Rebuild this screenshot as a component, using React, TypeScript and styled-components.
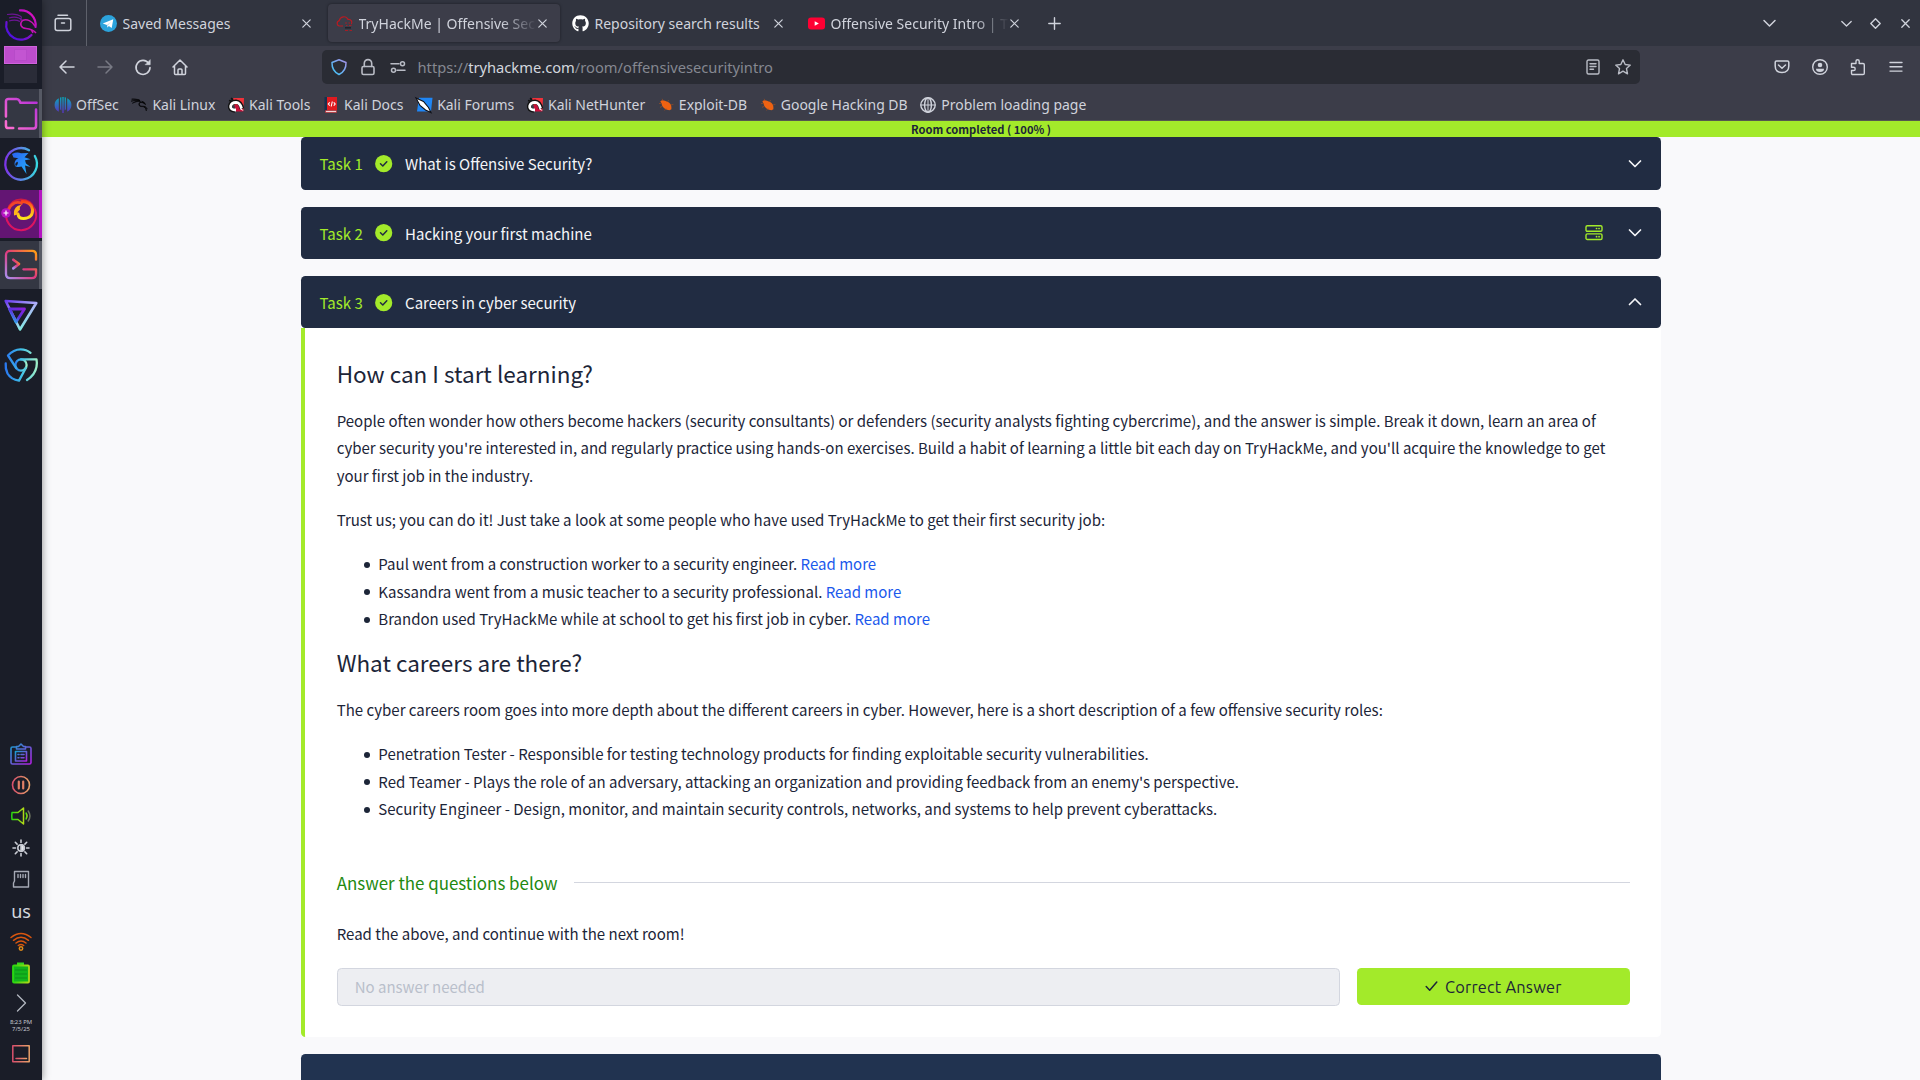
import React from 'react';
import styled, { createGlobalStyle } from 'styled-components';
import { SiKalilinux } from 'react-icons/si';
import { FaGithub } from 'react-icons/fa';

const ui = '"Noto Sans", "DejaVu Sans", sans-serif';
const body = '"Noto Sans CJK SC", "Noto Sans", sans-serif';

const Global = createGlobalStyle`
  * { box-sizing: border-box; }
  body { margin: 0; background: #f9f9fb; overflow: hidden; }
  svg { display: block; flex: none; overflow: visible; }
`;

const Desktop = styled.div`
  display: flex;
  width: 1920px;
  height: 1080px;
  overflow: hidden;
  font-family: ${ui};
`;

/* ---------- dock ---------- */
const Dock = styled.aside`
  display: flex;
  flex-direction: column;
  flex: none;
  width: 42px;
  height: 1080px;
  background: #1a1d28;
  box-shadow: 0 0 8px rgba(0, 0, 0, 0.45);
  z-index: 2;
`;
const Launcher = styled.div`
  display: flex;
  align-items: center;
  justify-content: center;
  height: 46px;
  padding-top: 4px;
`;
const Pager = styled.div`
  display: flex;
  flex-direction: column;
  gap: 1px;
  padding: 0 5px 0 4px;
  height: 43px;
`;
const Workspace = styled.div<{ $active?: boolean }>`
  display: flex;
  align-items: center;
  justify-content: center;
  height: 18px;
  background: ${p => (p.$active ? '#bd4dcd' : '#2a2c38')};
  border: ${p => (p.$active ? '1px solid #cf62dc' : '0')};
`;
const MiniWindow = styled.div`
  width: 13px;
  height: 12px;
  background: #c355d2;
  border: 1px solid #b74bc9;
`;
const DockApp = styled.div<{ $bg?: string; $edge?: string; $h: number }>`
  display: flex;
  align-items: center;
  flex: none;
  height: ${p => p.$h}px;
  padding-left: 4px;
  background: ${p => p.$bg || 'transparent'};
  border-right: 3px solid ${p => p.$edge || 'transparent'};
`;
const DockApps = styled.div`
  display: flex;
  flex-direction: column;
  flex: 1;
`;
const AppMark = styled.div`
  position: relative;
  width: 34px;
  height: 34px;
`;
const AddBadge = styled.div`
  position: absolute;
  left: -3px;
  top: 11px;
`;
const Tray = styled.div`
  display: flex;
  flex-direction: column;
  align-items: center;
  padding-bottom: 10px;
`;
const TrayItem = styled.div<{ $h?: number }>`
  display: flex;
  align-items: center;
  justify-content: center;
  height: ${p => p.$h || 31.4}px;
`;
const Layout = styled.span`
  font-size: 18px;
  line-height: 20px;
  color: #d3d7de;
`;
const Clock = styled.div`
  height: 21.5px;
  font-size: 5.9px;
  line-height: 7px;
  text-align: center;
  color: #c5c8d0;
  padding-top: 2px;
`;

/* ---------- browser chrome ---------- */
const Browser = styled.div`
  display: flex;
  flex-direction: column;
  flex: 1;
  min-width: 0;
`;
const TabBar = styled.div`
  display: flex;
  align-items: center;
  height: 46px;
  background: #31343f;
  color: #d0d3dc;
`;
const TabList = styled.div`
  display: flex;
  align-items: center;
  justify-content: center;
  width: 45px;
  height: 46px;
  padding-right: 3px;
  margin-right: 5px;
  border-right: 1px solid #5e616b;
`;
const Tab = styled.div<{ $active?: boolean }>`
  display: flex;
  align-items: center;
  width: 232px;
  height: 38px;
  margin-right: 4px;
  padding: 0 0 0 7.5px;
  border-radius: 4px;
  background: ${p => (p.$active ? '#3c3d49' : 'transparent')};
  box-shadow: ${p => (p.$active ? '0 0 3px rgba(0,0,0,.45)' : 'none')};
`;
const TabTitle = styled.span<{ $fade?: boolean }>`
  width: 179.5px;
  margin-left: 6px;
  font-size: 14px;
  line-height: 20px;
  padding-top: 1px;
  white-space: nowrap;
  overflow: hidden;
  mask-image: ${p => (p.$fade ? 'linear-gradient(to right, #000 142px, transparent 178px)' : 'none')};
`;
const Slot = styled.div<{ $w: number }>`
  display: flex;
  align-items: center;
  justify-content: center;
  flex: none;
  width: ${p => p.$w}px;
`;
const Spacer = styled.div`
  flex: 1;
`;
const ToolBar = styled.div`
  display: flex;
  align-items: center;
  height: 42px;
  padding: 0 6px 0 5.5px;
  background: #3c3d49;
  color: #d0d3dc;
`;
const UrlBar = styled.div`
  display: flex;
  align-items: center;
  width: 1318px;
  height: 34px;
  margin-left: 122.5px;
  padding: 0 1px 0 2px;
  border-radius: 5px;
  background: #2a2c34;
  color: #b9bcc5;
`;
const Url = styled.span`
  flex: 1;
  margin-left: 5px;
  font-size: 14.7px;
  line-height: 20px;
  color: #858891;
  & b {
    font-weight: 400;
    color: #d3d7de;
  }
`;
const Bookmarks = styled.div`
  display: flex;
  align-items: center;
  gap: 12.7px;
  height: 33px;
  padding: 1px 0 0 13px;
  background: #3c3d49;
  border-bottom: 1px solid #55584f;
`;
const Bookmark = styled.div`
  display: flex;
  align-items: center;
  gap: 5px;
  font-size: 13.97px;
  line-height: 20px;
  white-space: nowrap;
  color: #d0d3dc;
`;

/* ---------- page ---------- */
const Page = styled.main`
  display: flex;
  flex-direction: column;
  flex: 1;
  overflow: hidden;
  background: #f9f9fb;
  font-family: ${body};
`;
const Progress = styled.div`
  height: 16px;
  flex: none;
  font-size: 11.2px;
  line-height: 16px;
  font-weight: 700;
  text-align: center;
  color: #1c2538;
  background: #a3ea2a;
`;
const Room = styled.div`
  display: flex;
  flex-direction: column;
  flex: none;
  width: 1360px;
  margin: 0.4px 0 0 259px;
`;
const TaskHeader = styled.div<{ $open?: boolean }>`
  display: flex;
  align-items: center;
  height: 52.3px;
  margin-bottom: ${p => (p.$open ? 0 : 16.9)}px;
  padding: 0.8px 17px 0 18.6px;
  border-radius: 4.5px;
  font-size: 15px;
  line-height: 25px;
  color: #f4f5f8;
  background: #212c42;
`;
const TaskNo = styled.span`
  width: 55.5px;
  color: #a3ea2a;
`;
const TaskTitle = styled.span`
  flex: 1;
  margin-left: 12.6px;
`;
const TaskBody = styled.section`
  padding: 32.1px 31px 30px 31.7px;
  height: 708.6px;
  border-left: 4px solid #a3ea2a;
  border-radius: 0 0 4.5px 4.5px;
  background: #fff;
  color: #1c2538;
  font-size: 15.035px;
  line-height: 27.4px;
`;
const Heading = styled.h2`
  margin: 0 0 19.2px;
  font-size: 22.5px;
  line-height: 27.4px;
  font-weight: 400;
`;
const Para = styled.p<{ $mb?: number }>`
  margin: 0 0 ${p => p.$mb ?? 17}px;
  white-space: nowrap;
`;
const List = styled.ul<{ $mb: number }>`
  margin: 0 0 ${p => p.$mb}px;
  padding: 0 0 0 27px;
  list-style: none;
`;
const Item = styled.li`
  display: flex;
  align-items: center;
  white-space: nowrap;
  &::before {
    content: '';
    width: 6px;
    height: 6px;
    margin: 2px 8.6px 0 0;
    border-radius: 50%;
    background: #1c2538;
  }
`;
const Link = styled.a`
  color: #1b59ec;
`;
const Section = styled.div`
  display: flex;
  align-items: center;
  gap: 17px;
  margin-bottom: 23.8px;
  font-size: 16.92px;
  color: #22890f;
  &::after {
    content: '';
    flex: 1;
    height: 1px;
    background: #d3d6df;
  }
`;
const AnswerRow = styled.div`
  display: flex;
  gap: 17px;
`;
const Answer = styled.div`
  width: 1003px;
  height: 37.8px;
  padding-left: 17px;
  border: 1px solid #d3d6df;
  border-radius: 4.5px;
  line-height: 36px;
  font-size: 15px;
  color: #b9bfcb;
  background: #edeef2;
`;
const Correct = styled.div`
  display: flex;
  align-items: center;
  justify-content: center;
  gap: 7px;
  flex: 1;
  height: 37.6px;
  border-radius: 4.5px;
  font-family: Ubuntu, ${ui};
  font-size: 16.4px;
  letter-spacing: 0.2px;
  line-height: 24px;
  color: #1c2538;
  background: #a3ea2a;
`;
const NextCard = styled.div`
  height: 60px;
  margin-top: 17px;
  border-radius: 4.5px;
  background: #213350;
`;
const DefsSvg = styled.svg`
  width: 0;
  height: 0;
`;

/* ---------- drawings ---------- */
const Line = ({ d, s = 16, w = 1.3, c = 'currentColor', children }: { d?: string; s?: number; w?: number; c?: string; children?: React.ReactNode }) => (
  <svg width={s} height={s} viewBox={`0 0 ${s} ${s}`} fill="none" stroke={c} strokeWidth={w} strokeLinecap="round" strokeLinejoin="round">
    {d && <path d={d} />}
    {children}
  </svg>
);
const Close = () => <Line s={9} w={1.2} d="M.8.8 8.2 8.2M8.2.8.8 8.2" />;

const Defs = () => (
  <DefsSvg>
    <defs>
      <linearGradient id="kali" x1="0" y1="1" x2="1" y2="0"><stop offset="0" stopColor="#3a12e8" /><stop offset=".5" stopColor="#8a10c8" /><stop offset="1" stopColor="#f010c0" /></linearGradient>
      <linearGradient id="folder" x1="0" y1="1" x2="1" y2="0"><stop offset="0" stopColor="#ff6fd0" /><stop offset="1" stopColor="#b32fd8" /></linearGradient>
      <linearGradient id="ring" x1="0" y1="0" x2="1" y2="0"><stop offset="0" stopColor="#7d35e8" /><stop offset="1" stopColor="#38d8e0" /></linearGradient>
      <linearGradient id="blue" x1="0" y1="0" x2="1" y2="1"><stop offset="0" stopColor="#2b62f5" /><stop offset="1" stopColor="#22b4f5" /></linearGradient>
      <linearGradient id="fire" x1="0" y1="1" x2="0" y2="0"><stop offset="0" stopColor="#ffe51a" /><stop offset=".5" stopColor="#ffa01a" /><stop offset="1" stopColor="#f9401c" /></linearGradient>
      <linearGradient id="term" x1="0" y1="1" x2="1" y2="0"><stop offset="0" stopColor="#a890f0" /><stop offset=".5" stopColor="#e0387c" /><stop offset="1" stopColor="#ffa010" /></linearGradient>
      <linearGradient id="tri" x1="0" y1="0" x2=".6" y2="1"><stop offset="0" stopColor="#6b3cf0" /><stop offset=".5" stopColor="#b0b0f8" /><stop offset="1" stopColor="#7ff0e0" /></linearGradient>
      <linearGradient id="tri2" x1="1" y1="0" x2="0" y2="1"><stop offset="0" stopColor="#8a20d8" /><stop offset=".5" stopColor="#5b30e0" /><stop offset="1" stopColor="#20e0f0" /></linearGradient>
      <linearGradient id="chrome" x1="0" y1="0" x2="1" y2="0"><stop offset="0" stopColor="#2a78f0" /><stop offset=".5" stopColor="#3fc0e8" /><stop offset="1" stopColor="#9ff0c8" /></linearGradient>
      <linearGradient id="clip" x1="0" y1="0" x2="1" y2="1"><stop offset="0" stopColor="#18a0d0" /><stop offset="1" stopColor="#b020e0" /></linearGradient>
      <linearGradient id="warm" x1="0" y1="0" x2="1" y2="0"><stop offset="0" stopColor="#d8506c" /><stop offset="1" stopColor="#e8a068" /></linearGradient>
      <linearGradient id="lime" x1="0" y1="0" x2="1" y2="0"><stop offset="0" stopColor="#28d810" /><stop offset="1" stopColor="#b0d818" /></linearGradient>
      <linearGradient id="off" x1="0" y1="0" x2="0" y2="1"><stop offset="0" stopColor="#08a8b8" /><stop offset="1" stopColor="#5a30c0" /></linearGradient>
      <linearGradient id="shield" x1="0" y1="1" x2="1" y2="0"><stop offset="0" stopColor="#38c8f8" /><stop offset="1" stopColor="#a890e8" /></linearGradient>
    </defs>
  </DefsSvg>
);

const Globe = () => (
  <Line w={1.4}><circle cx="8" cy="8" r="7.2" /><ellipse cx="8" cy="8" rx="3.4" ry="7.2" /><path d="M1 8h14M8 1v14" strokeWidth="1" /></Line>
);
const Beetle = () => (
  <svg width="16" height="16" viewBox="0 0 16 16">
    <path d="M2.300 4.500Q4 2.500 7 3.800L11 5.600Q13.800 7.500 13.400 12.200L11.500 13.200Q6 12.500 4 8.500L3.600 6.500z" fill="#ee6212" />
    <path d="M1 6.500 3.500 6.500M5 3.500 4.200 1.800M9.500 5 10.600 3M12.800 8 15.400 7.400M4.500 9.200 2 10.400M8 11.500 6.600 13.500" stroke="#9a4d24" strokeWidth=".7" />
  </svg>
);
const DragonTile = () => (
  <svg width="16" height="16" viewBox="0 0 16 16">
    <path d="M5 1h11l-.6 13H8z" fill="#f0323a" />
    <path d="M6.500 8l5.500-.5 3.500 7H8z" fill="#c8103a" />
    <path d="M3 1.200l2 1.500M1 3.500l3.500 1" stroke="#111" strokeWidth="1.800" />
    <path d="M7 13.500Q1.500 13 2.200 9 3 5 8 4.800q4.500.2 6 7" fill="none" stroke="#111" strokeWidth="4.600" />
    <path d="M8 13Q2 13 2.700 9 3.500 5.300 8 5.300q4 .2 5.500 6" fill="none" stroke="#fff" strokeWidth="2.800" />
    <path d="M12 9.500l3.600 4.500-3.200-1.500z" fill="#fff" />
  </svg>
);
const Check = () => (
  <svg width="17.400" height="17.400" viewBox="0 0 17.400 17.400">
    <circle cx="8.700" cy="8.700" r="8.600" fill="#a3ea2a" />
    <path d="M5.500 8.800l2.300 2.200 4-4.200" fill="none" stroke="#212c42" strokeWidth="1.500" strokeLinecap="round" strokeLinejoin="round" />
  </svg>
);
const Servers = () => (
  <Line s={18} w={1.400} c="#a3ea2a">
    <rect x="1" y="1.700" width="16" height="5.600" rx="1.300" /><rect x="1" y="9.900" width="16" height="5.600" rx="1.300" />
    <path d="M11.500 4.500h.1M14 4.500h.1M11.500 12.700h.1M14 12.700h.1" strokeWidth="1.700" />
  </Line>
);

const tabs = [
  { title: 'Saved Messages', icon: <svg width="17" height="17" viewBox="0 0 16 16"><circle cx="8" cy="8" r="8" fill="#2ca3dc" /><path d="M2.600 8 12.500 4 11 12.300 8.300 10.400 7 11.800 6.500 9.500z" fill="#fff" /><path d="M6.500 9.500 10.500 6 7.400 9.900 7 11.800z" fill="#bcd9ea" /></svg> },
  { title: 'TryHackMe | Offensive Sec', active: true, fade: true, icon: <svg width="17" height="17" viewBox="0 0 17 17"><path d="M7 11H3.500a2.700 2.700 0 0 1-.2-5.300A4.600 4.600 0 0 1 12 4.400a3.200 3.200 0 0 1 3.400 4.800" fill="none" stroke="#b81b22" strokeWidth="1.200" /><path d="M9 8h2M12.500 8H14M10 10.500h1.500M13 10.500h2.500M9 15.500h3M13.500 15.500H16" stroke="#a31e26" /><path d="M9 12.800h6" stroke="#22242c" strokeWidth="1.600" /></svg> },
  { title: 'Repository search results', icon: <FaGithub size={17} color="#fff" /> },
  { title: 'Offensive Security Intro | T', fade: true, icon: <svg width="17" height="13" viewBox="0 0 17 13"><rect y=".5" width="17" height="12" rx="3" fill="#ff0033" /><path d="M6.700 4.200v4.600l4.200-2.300z" fill="#fff" /></svg> },
];

const bookmarks: [string, React.ReactNode][] = [
  ['OffSec', <svg width="16" height="16" viewBox="0 0 16 16"><path d="M3.800 1.200v13.600A7.600 7.600 0 0 1 3.800 1.200zM5 .6 6.400.2V13.500L5 12.300zM7.300 0h1.400v16H7.300zM9.600.2 11 .6V12.300L9.600 13.500zM12.200 1.200a7.600 7.600 0 0 1 0 13.600z" fill="url(#off)" /></svg>],
  ['Kali Linux', <SiKalilinux size={16} color="#050507" stroke="#050507" strokeWidth={0.9} />],
  ['Kali Tools', <DragonTile />],
  ['Kali Docs', <svg width="16" height="16" viewBox="0 0 16 16"><path d="M2.500 0H14v13H2.500z" fill="#e01a1f" /><path d="M1.500 0H4v14H1.500z" fill="#17304f" /><path d="M2.500 13.500h11v2h-11z" fill="#f2d7d8" stroke="#c01a1f" strokeWidth=".6" /><path d="M6.800 5.300 5.300 7l1.500 1.700M10.700 5.300 12.200 7l-1.500 1.700M9.300 4.500 8.200 9.500" fill="none" stroke="#fff" strokeWidth="1.100" /></svg>],
  ['Kali Forums', <svg width="16" height="16" viewBox="0 0 16 16"><path d="M3 .8h13.500L15 14.500H1z" fill="#1f86f5" /><path d="M0 1 7.500 4.500 12.500 10.500 15 15.500 9.500 13 4 8.500z" fill="#fff" stroke="#0d0f16" strokeWidth="1.100" /></svg>],
  ['Kali NetHunter', <DragonTile />],
  ['Exploit-DB', <Beetle />],
  ['Google Hacking DB', <Beetle />],
  ['Problem loading page', <Globe />],
];

export default function App() {
  return (
    <Desktop>
      <Global />
      <Dock>
        <Launcher>
          <svg width="32" height="32" viewBox="0 0 32 32" fill="none">
            <path d="M15 1.400A14.600 14.600 0 0 1 30.500 18M26.500 26A14.600 14.600 0 0 1 1.500 13" stroke="url(#kali)" strokeWidth="2.200" strokeLinecap="round" />
            <path d="M2 5.500C8 4.500 13 5 16.500 8M4 9C9 7.500 14 8 17.500 11.500M4 12C9 10.500 12 11 15 12.500M16.500 8l-1 3.500" stroke="#6d1596" strokeWidth="1.200" />
            <path d="M17.500 11.500C22 9.500 27 12 30 17M17.500 11.500C14 15 16 19 21 19.500S28.500 21 31 24M26 20.500 28 24" stroke="#c414b4" strokeWidth="1.500" />
          </svg>
        </Launcher>
        <Pager><Workspace $active><MiniWindow /></Workspace><Workspace /></Pager>
        <DockApps>
          <DockApp $h={48.500} $bg="#343743" $edge="#565964">
            <svg width="34" height="33" viewBox="0 0 34 34" fill="none" stroke="url(#folder)" strokeWidth="2.600" strokeLinecap="round" strokeLinejoin="round"><path d="M1.500 20V4.500Q1.500 2 4 2h8.500q2 0 3 2l1 2H33M32.500 13v17q0 2.500-2.500 2.500H15M1.500 25v4.500q0 2.500 2.500 2.500h5" /></svg>
          </DockApp>
          <DockApp $h={52}>
            <svg width="34" height="34" viewBox="0 0 34 34" fill="none" stroke="url(#ring)" strokeWidth="2.300" strokeLinecap="round">
              <path d="M25 3.200A15.800 15.800 0 1 0 30.800 9" />
              <path d="M8 7q5-2.500 9-.7l7.500-.3-4 4.300 6 2-5.500 1 1 3.200 4.500 3.500-5.500-1.500 1.500 8.500-5-7.500-3 .5q-4 .5-4-3.500.3-4 4-5.200L9.500 10.500z" fill="url(#blue)" stroke="none" />
              <path d="M11.300 18.500q-.3-3.200 2.500-3.700.5 3.200-1.200 4z" fill="#1a1d28" stroke="none" />
            </svg>
          </DockApp>
          <DockApp $h={48.500} $bg="#631573" $edge="#b514c2">
            <AppMark>
              <svg width="34" height="34" viewBox="0 0 34 34" fill="none" strokeLinecap="round">
                <path d="M31 12.500A15 15 0 1 1 3 13" stroke="#dd1460" strokeWidth="2" />
                <path d="M3.500 13Q7 2.500 17 2.500T30.500 12" stroke="#cc1a45" strokeWidth="2" />
                <path d="M4.500 13q2-5 6-7 4-1.500 7 .5" stroke="#f2452a" strokeWidth="2.600" />
                <path d="M18 4.500q9 0 10.500 8 .5 8.500-9 9-5 0-5.500-4.500" stroke="url(#fire)" strokeWidth="3" />
                <path d="M10 18.500q-1-6.500 3.500-9.500l4.500-1.500q-3 2.500-2 5-2.500 1.500-2.500 5z" fill="#ffb41a" />
              </svg>
              <AddBadge><svg width="10" height="10" viewBox="0 0 10 10"><circle cx="5" cy="5" r="4.800" fill="#b514c2" /><path d="M5 2.500v5M2.500 5h5" stroke="#fff" strokeWidth="1.200" /></svg></AddBadge>
            </AppMark>
          </DockApp>
          <DockApp $h={2.500} />
          <DockApp $h={48.500} $bg="#343743" $edge="#565964">
            <svg width="34" height="31" viewBox="0 0 34 32" fill="none" stroke="url(#term)" strokeWidth="2.400" strokeLinecap="round" strokeLinejoin="round"><path d="M32.500 11V6q0-4-4-4H6Q1.500 2 1.500 6.500v19Q1.500 30 6 30h22q4.500 0 4.500-4.500V21H19.500" /><path d="M9 11l6 4.500L9 20" strokeWidth="2.600" /></svg>
          </DockApp>
          <DockApp $h={52}>
            <svg width="34" height="34" viewBox="0 0 34 34" fill="none" strokeLinejoin="round"><path d="M1.700 3 32.300 5 16 31.500z" stroke="url(#tri)" strokeWidth="2.600" /><path d="M5.500 11h15L12 24z" stroke="url(#tri2)" strokeWidth="2.800" /></svg>
          </DockApp>
          <DockApp $h={48}>
            <svg width="34" height="34" viewBox="0 0 34 34" fill="none" stroke="url(#chrome)" strokeWidth="2.300" strokeLinecap="round" strokeLinejoin="round"><circle cx="17" cy="17" r="5.600" /><path d="M17 11.400H32.500Q34 19 29.500 26 26.500 30 23 32M21.800 20 15 32.600Q7 31.500 3.500 25.500 1.200 21 1.700 15.500M12.200 20 4 7.500Q9.500 1.300 16.500 1.300q6 0 10 3.500" /></svg>
          </DockApp>
        </DockApps>
        <Tray>
          <TrayItem><Line s={22} w={1.600} c="url(#clip)"><path d="M6.500 4H2.500Q1 4 1 5.500v14Q1 21 2.500 21h17q1.500 0 1.500-1.500v-14Q21 4 19.500 4h-4M6.500 3.500h2L11 1l2.500 2.500h2V6h-9z" /><path d="M5.500 8.500h11v9.500h-11zM8 11.500h1M11 11.500h3M8 14.800h1M11 14.800h3" /></Line></TrayItem>
          <TrayItem><Line s={20} w={1.600} c="url(#warm)"><circle cx="10" cy="10" r="8.500" /><path d="M7.800 6.500v7M12.200 6.500v7.010" stroke="#e07f66" strokeWidth="2.200" /></Line></TrayItem>
          <TrayItem><Line s={20} w={1.500} c="url(#lime)"><path d="M1 6.500h6L12.500 2v16L7 13.500H1Q.500 10 1 6.500z" /><path d="M15 7q2 3 0 6" /><path d="M17.200 5q3.500 5 0 10" stroke="#6d7460" /></Line></TrayItem>
          <TrayItem><Line s={18} w={1.600} c="#c9ccd4"><path d="M9 1v2.500M9 14.500V17M1 9h2.500M14.500 9H17M3.300 3.300l1.800 1.800M12.900 12.900l1.800 1.800M3.300 14.700l1.800-1.800M12.900 5.100l1.800-1.800" /><circle cx="9" cy="9" r="3.200" /><path d="M9 5.800a3.200 3.200 0 0 1 0 6.400z" fill="#e8eaef" /></Line></TrayItem>
          <TrayItem><Line s={18} w={1.400} c="#a5a9b5"><path d="M2.500 1.500h14v15.500h-15v-4l1-2zM6 4.500v3M8.500 4.500v3M11 4.500v3M13.500 4.500v3" /></Line></TrayItem>
          <TrayItem><Layout>us</Layout></TrayItem>
          <TrayItem><Line s={22} w={1.500} c="#d9560f"><path d="M1 6.500q10-8 20 0M3.500 9.300q7.500-6 15 0M6 12q5-4 10 0M8.300 14.500q2.700-2 5.400 0" /><circle cx="11" cy="17.500" r="1.700" stroke="#e08a18" /></Line></TrayItem>
          <TrayItem><svg width="20" height="22" viewBox="0 0 20 22"><path d="M6 .5h7v3H6z" fill="#35d81c" /><rect x="2" y="3.500" width="16" height="17" rx="1" fill="#12b41c" stroke="url(#lime)" strokeWidth="1.800" /><path d="M4 8h12M4 12h12M4 16h12" stroke="#0d8f18" /></svg></TrayItem>
          <TrayItem $h={28}><Line s={18} w={1.300} c="#b4b8c2" d="M5.500 1l8 8-8 8" /></TrayItem>
          <Clock>8:23 PM<br />7/5/25</Clock>
          <TrayItem><Line s={18} w={1.500} c="url(#warm)"><rect x=".8" y=".8" width="16.400" height="16" /><path d="M4 13.500h10.500v.01" /></Line></TrayItem>
        </Tray>
      </Dock>

      <Browser>
        <TabBar>
          <TabList><Line s={18} w={1.500}><path d="M4 1.200h9.500" /><rect x="1.200" y="4.500" width="15.600" height="12" rx="2" /><path d="M7.500 9h3" /></Line></TabList>
          {tabs.map(t => (
            <Tab key={t.title} $active={t.active}>
              <Slot $w={17}>{t.icon}</Slot>
              <TabTitle $fade={t.fade}>{t.title}</TabTitle>
              <Close />
            </Tab>
          ))}
          <Slot $w={36}><Line s={13} w={1.400} d="M6.500.8v11.400M.8 6.500h11.400" /></Slot>
          <Spacer />
          <Slot $w={60}><Line s={13} w={1.500} d="M1 3.500l5.500 5.500L12 3.500" /></Slot>
          <Slot $w={32} />
          <Slot $w={30}><Line s={11} w={1.300} d="M.8 3.500 5.500 8l4.700-4.500" /></Slot>
          <Slot $w={29}><Line s={11} w={1.400} d="M5.500.8 10.200 5.500 5.500 10.200.8 5.500z" /></Slot>
          <Slot $w={30}><Line s={9} w={1.300} d="M.8.8 8.200 8.200M8.200.8.8 8.200" /></Slot>
        </TabBar>

        <ToolBar>
          <Slot $w={38}><Line w={1.500} d="M15 8H1M7 2 1 8l6 6" /></Slot>
          <Slot $w={38}><Line w={1.500} c="#787a84" d="M1 8h14M9 2l6 6-6 6" /></Slot>
          <Slot $w={38}><Line w={1.600}><path d="M13.800 4.500A7 7 0 1 0 15 8.500" /><path d="M15.200 1v4.700h-4.700z" fill="currentColor" strokeWidth=".6" /></Line></Slot>
          <Slot $w={37.500}><Line w={1.500} d="M1 8 8 1l7 7M2.500 7v7.500q0 1 1 1h9q1 0 1-1V7M6 15.500V11q0-1 1-1h2q1 0 1 1v4.500" /></Slot>
          <UrlBar>
            <Slot $w={30}><Line w={1.500} c="url(#shield)" d="M8 .8 15 3.500Q15.300 12 8 15.500.7 12 1 3.500z" /></Slot>
            <Slot $w={29}><Line w={1.600}><rect x="2" y="7.500" width="12" height="8" rx="1.500" /><path d="M4.300 7.500V4.300a3.700 3.700 0 0 1 7.400 0v3.200" /></Line></Slot>
            <Slot $w={30}><Line w={1.500}><path d="M1 4.700h8M15 11.300H7" /><circle cx="12.500" cy="4.700" r="2" /><circle cx="3.500" cy="11.300" r="2" /></Line></Slot>
            <Url>https://<b>tryhackme.com</b>/room/offensivesecurityintro</Url>
            <Slot $w={29}><Line w={1.400}><rect x="2" y="1" width="12" height="14" rx="1.500" /><path d="M5 4.700h6M5 7.500h6M5 10.300h3.500" /></Line></Slot>
            <Slot $w={31}><Line w={1.400} d="M8 .8l2.200 4.700 5.100.6-3.800 3.500 1 5.200L8 12.200l-4.500 2.600 1-5.200L.7 6.100l5.100-.6z" /></Slot>
          </UrlBar>
          <Spacer />
          <Slot $w={38}><Line w={1.500}><path d="M2.500 2h11q1.300 0 1.300 1.300V7q0 6.500-6.800 6.500T1.200 7V3.300Q1.200 2 2.500 2z" /><path d="M4.500 6 8 9.200 11.500 6" /></Line></Slot>
          <Slot $w={38}><Line w={1.400}><circle cx="8" cy="8" r="7.300" /><circle cx="8" cy="6" r="2.300" fill="currentColor" stroke="none" /><path d="M4 9.700h8q0 3.300-4 3.300T4 9.700z" fill="currentColor" stroke="none" /></Line></Slot>
          <Slot $w={38}><Line w={1.400} d="M6 4.500V2.300a1.500 1.500 0 0 1 3.200 0v2.200H13q1.300 0 1.300 1.300v8.400q0 1.300-1.300 1.300H2.800q-1.300 0-1.300-1.300V11.500H3.600a1.500 1.500 0 0 0 0-3.200H1.500V4.500z" /></Slot>
          <Slot $w={37}><Line s={14} w={1.400} d="M1 2.500h12M1 6.800h12M1 11.100h12" /></Slot>
        </ToolBar>

        <Bookmarks>
          {bookmarks.map(([name, icon]) => <Bookmark key={name}>{icon}{name}</Bookmark>)}
        </Bookmarks>

        <Page>
          <Progress>Room completed ( 100% )</Progress>
          <Room>
            <TaskHeader><TaskNo>Task 1</TaskNo><Check /><TaskTitle>What is Offensive Security?</TaskTitle><Line s={18} w={1.700} d="M3.500 6l5.500 5.500L14.500 6" /></TaskHeader>
            <TaskHeader><TaskNo>Task 2</TaskNo><Check /><TaskTitle>Hacking your first machine</TaskTitle><Servers /><Slot $w={23} /><Line s={18} w={1.700} d="M3.500 6l5.500 5.500L14.500 6" /></TaskHeader>
            <TaskHeader $open><TaskNo>Task 3</TaskNo><Check /><TaskTitle>Careers in cyber security</TaskTitle><Line s={18} w={1.700} d="M3.500 11.500 9 6l5.500 5.500" /></TaskHeader>
            <TaskBody>
              <Heading>How can I start learning?</Heading>
              <Para>
                People often wonder how others become hackers (security consultants) or defenders (security analysts fighting cybercrime), and the answer is simple. Break it down, learn an area of<br />
                cyber security you're interested in, and regularly practice using hands-on exercises. Build a habit of learning a little bit each day on TryHackMe, and you'll acquire the knowledge to get<br />
                your first job in the industry.
              </Para>
              <Para>Trust us; you can do it! Just take a look at some people who have used TryHackMe to get their first security job:</Para>
              <List $mb={16.700}>
                <Item><span>Paul went from a construction worker to a security engineer. <Link>Read more</Link></span></Item>
                <Item><span>Kassandra went from a music teacher to a security professional. <Link>Read more</Link></span></Item>
                <Item><span>Brandon used TryHackMe while at school to get his first job in cyber. <Link>Read more</Link></span></Item>
              </List>
              <Heading>What careers are there?</Heading>
              <Para>The cyber careers room goes into more depth about the different careers in cyber. However, here is a short description of a few offensive security roles:</Para>
              <List $mb={46.600}>
                <Item><span>Penetration Tester - Responsible for testing technology products for finding exploitable security vulnerabilities.</span></Item>
                <Item><span>Red Teamer - Plays the role of an adversary, attacking an organization and providing feedback from an enemy's perspective.</span></Item>
                <Item><span>Security Engineer - Design, monitor, and maintain security controls, networks, and systems to help prevent cyberattacks.</span></Item>
              </List>
              <Section>Answer the questions below</Section>
              <Para $mb={20.200}>Read the above, and continue with the next room!</Para>
              <AnswerRow>
                <Answer>No answer needed</Answer>
                <Correct><Line s={13} w={1.500} d="M1.200 6.500l3.500 3.800L11.800 2" />Correct Answer</Correct>
              </AnswerRow>
            </TaskBody>
            <NextCard />
          </Room>
        </Page>
      </Browser>
      <Defs />
    </Desktop>
  );
}
